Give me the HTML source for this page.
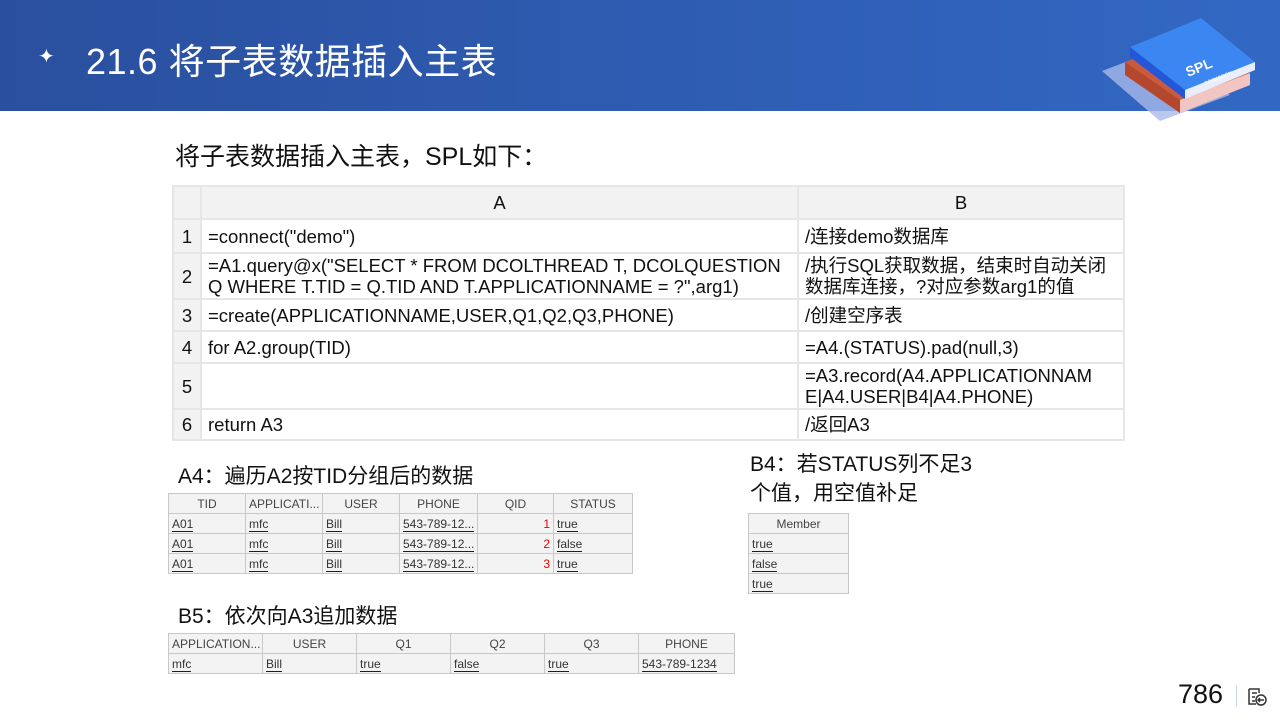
<!DOCTYPE html><html><head><meta charset="utf-8"><style>
*{margin:0;padding:0;box-sizing:border-box}
body{width:1280px;height:720px;position:relative;background:#fff;font-family:"Liberation Sans","Noto Sans CJK SC",sans-serif;overflow:hidden}
.hdr{position:absolute;left:0;top:0;width:1280px;height:111px;background:linear-gradient(90deg,#2a4f9e,#3268c4)}
.t{position:absolute;color:#fff;font-size:36px;left:86px;top:33px;letter-spacing:0.5px;font-family:"Liberation Sans","Noto Sans CJK SC",sans-serif}
.abs{position:absolute}
table{border-collapse:collapse;table-layout:fixed;position:absolute}
.m td{border:2px solid #e6e6e6;font-family:"Liberation Sans","Noto Sans CJK SC",sans-serif;font-size:18.5px;color:#111;padding:0 6px;line-height:21px;white-space:nowrap;overflow:hidden}
.m tr.h td{background:#f2f2f2;text-align:center}
.m td.n{background:#f2f2f2;text-align:center;padding:0}
.s td{border:1px solid #c6c9cc;background:#f3f3f3;font-size:12px;height:20px;padding:0 3px;color:#333;white-space:nowrap;overflow:hidden}
.s tr.h td{text-align:center;color:#444}
.s u{color:#333;text-decoration:none;border-bottom:1px solid #00f}
.s td.r{color:#e00;text-align:right}
.cap{position:absolute;font-family:"Liberation Sans","Noto Sans CJK SC",sans-serif;font-size:21px;color:#111}
</style></head><body>
<div class="hdr"></div>
<div class="abs" style="left:38px;top:44px;color:#fff;font-size:20px">✦</div>
<div class="t">21.6 将子表数据插入主表</div>
<svg class="abs" style="left:1100px;top:15px" width="160" height="110" viewBox="0 0 160 110">
<polygon points="2,56 70,30 130,80 60,106" fill="#a9b9ea" opacity="0.8"/>
<polygon points="25,47 95,22 150,60 80,88" fill="#c95a3e"/>
<polygon points="25,47 80,85 80,98 25,60" fill="#b3482e"/>
<polygon points="80,85 150,58 150,70 80,98" fill="#f1c6c2"/>
<polygon points="30,32 101,3 155,47 85,77" fill="#3b86f0"/>
<polygon points="30,32 85,75 85,84 30,42" fill="#2456d8"/>
<polygon points="85,75 155,47 155,55 85,84" fill="#e8eefc"/>
<text x="88" y="62" fill="#fff" font-size="14" font-weight="bold" transform="rotate(-22 88 62)" font-family="Liberation Sans">SPL</text>
<text x="105" y="70" fill="#fff" font-size="5" transform="rotate(-22 105 70)" font-family="Liberation Sans">COOKBOOK</text>
</svg>
<div class="cap" style="left:175px;top:137px;font-size:25px">将子表数据插入主表，SPL如下：</div>
<table class="m" style="left:172px;top:185px;width:951px">
<colgroup><col style="width:28px"><col style="width:597px"><col style="width:326px"></colgroup>
<tr class="h" style="height:33px"><td class="n"></td><td>A</td><td>B</td></tr>
<tr style="height:34px"><td class="n">1</td><td>=connect("demo")</td><td>/连接demo数据库</td></tr>
<tr style="height:46px"><td class="n">2</td><td>=A1.query@x("SELECT * FROM DCOLTHREAD T, DCOLQUESTION<br>Q WHERE T.TID = Q.TID AND T.APPLICATIONNAME = ?",arg1)</td><td>/执行SQL获取数据，结束时自动关闭<br>数据库连接，?对应参数arg1的值</td></tr>
<tr style="height:32px"><td class="n">3</td><td>=create(APPLICATIONNAME,USER,Q1,Q2,Q3,PHONE)</td><td>/创建空序表</td></tr>
<tr style="height:32px"><td class="n">4</td><td>for A2.group(TID)</td><td>=A4.(STATUS).pad(null,3)</td></tr>
<tr style="height:46px"><td class="n">5</td><td></td><td>=A3.record(A4.APPLICATIONNAM<br>E|A4.USER|B4|A4.PHONE)</td></tr>
<tr style="height:31px"><td class="n">6</td><td>return A3</td><td>/返回A3</td></tr>
</table>
<div class="cap" style="left:178px;top:460px">A4：遍历A2按TID分组后的数据</div>
<div class="cap" style="left:750px;top:450px;line-height:29px">B4：若STATUS列不足3<br>个值，用空值补足</div>
<table class="s" style="left:168px;top:493px;width:464px">
<colgroup><col style="width:77px"><col style="width:77px"><col style="width:77px"><col style="width:78px"><col style="width:76px"><col style="width:79px"></colgroup>
<tr class="h"><td>TID</td><td>APPLICATI...</td><td>USER</td><td>PHONE</td><td>QID</td><td>STATUS</td></tr>
<tr><td><u>A01</u></td><td><u>mfc</u></td><td><u>Bill</u></td><td><u>543-789-12...</u></td><td class="r">1</td><td><u>true</u></td></tr>
<tr><td><u>A01</u></td><td><u>mfc</u></td><td><u>Bill</u></td><td><u>543-789-12...</u></td><td class="r">2</td><td><u>false</u></td></tr>
<tr><td><u>A01</u></td><td><u>mfc</u></td><td><u>Bill</u></td><td><u>543-789-12...</u></td><td class="r">3</td><td><u>true</u></td></tr>
</table>
<table class="s" style="left:748px;top:513px;width:101px">
<tr class="h"><td>Member</td></tr>
<tr><td><u>true</u></td></tr><tr><td><u>false</u></td></tr><tr><td><u>true</u></td></tr>
</table>
<div class="cap" style="left:178px;top:600px">B5：依次向A3追加数据</div>
<table class="s" style="left:168px;top:633px;width:566px">
<colgroup><col style="width:94px"><col style="width:94px"><col style="width:94px"><col style="width:94px"><col style="width:94px"><col style="width:96px"></colgroup>
<tr class="h"><td>APPLICATION...</td><td>USER</td><td>Q1</td><td>Q2</td><td>Q3</td><td>PHONE</td></tr>
<tr><td><u>mfc</u></td><td><u>Bill</u></td><td><u>true</u></td><td><u>false</u></td><td><u>true</u></td><td><u>543-789-1234</u></td></tr>
</table>
<div class="abs" style="left:1178px;top:679px;font-size:27px;color:#111">786</div>
<div class="abs" style="left:1236px;top:685px;width:1px;height:22px;background:#c8d4ea"></div>
<svg class="abs" style="left:1246px;top:686px" width="22" height="22" viewBox="0 0 22 22" fill="none" stroke="#333" stroke-width="1.5">
<path d="M3 3h10v4M3 3v15h7M6 7h5M6 11h3M6 15h3"/><circle cx="15" cy="14" r="5"/><path d="M18 14h-6M14 12l-2 2 2 2"/></svg>
</body></html>
